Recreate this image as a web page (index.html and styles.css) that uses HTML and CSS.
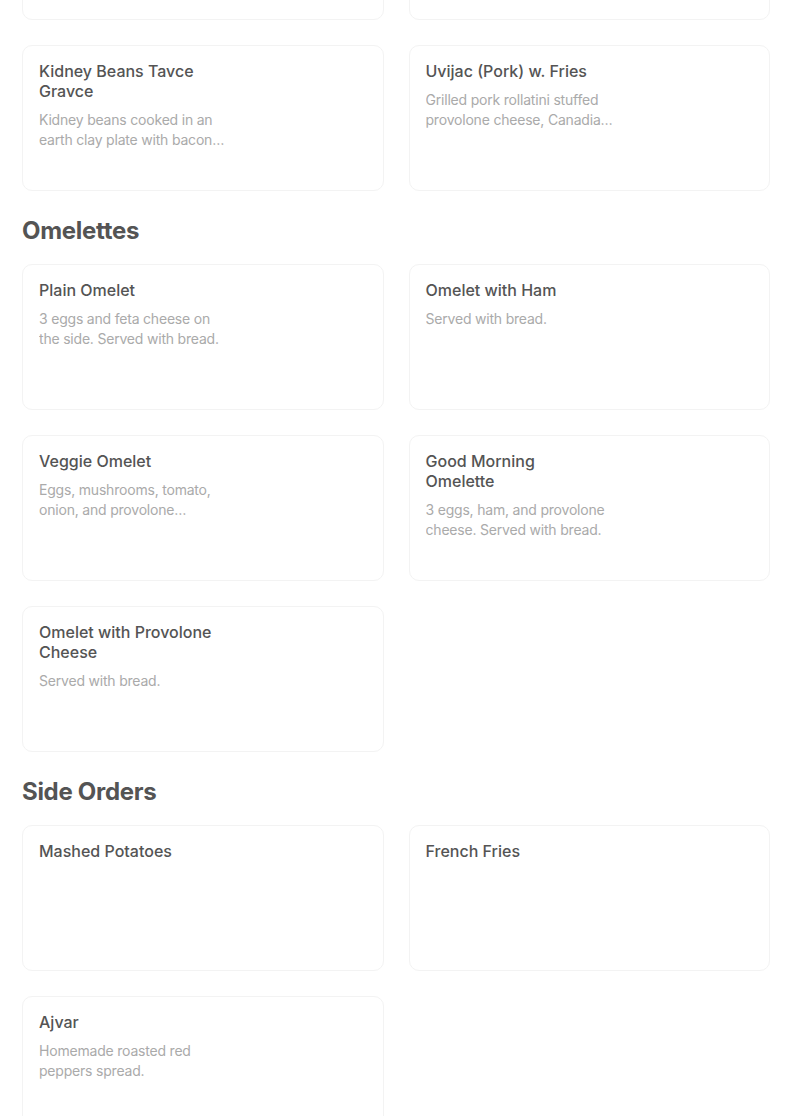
FILE: index.html
```html
<!DOCTYPE html>
<html lang="en">
  <head>
    <meta charset="UTF-8" />
    <meta name="viewport" content="width=device-width, initial-scale=1.0" />
    <title>Menu</title>
    <link rel="stylesheet" href="styles.css">
  </head>
  <body>
    <div class="menu">
      <section class="menu-section">
        <div class="item-grid">
          <!-- previous row, scrolled above the fold -->
          <div class="item-card"></div>
          <div class="item-card"></div>
          <div class="item-card">
            <div class="item-text">
              <h3 class="item-name">Kidney Beans Tavce Gravce</h3>
              <p class="item-desc">Kidney beans cooked in an earth clay plate with bacon and sausage. Served with bread.</p>
            </div>
          </div>
          <div class="item-card">
            <div class="item-text">
              <h3 class="item-name">Uvijac (Pork) w. Fries</h3>
              <p class="item-desc">Grilled pork rollatini stuffed provolone cheese, Canadian bacon and served with fries.</p>
            </div>
          </div>
        </div>
      </section>

      <section class="menu-section">
        <h2 class="section-title">Omelettes</h2>
        <div class="item-grid">
          <div class="item-card">
            <div class="item-text">
              <h3 class="item-name">Plain Omelet</h3>
              <p class="item-desc">3 eggs and feta cheese on the side. Served with bread.</p>
            </div>
          </div>
          <div class="item-card">
            <div class="item-text">
              <h3 class="item-name">Omelet with Ham</h3>
              <p class="item-desc">Served with bread.</p>
            </div>
          </div>
          <div class="item-card">
            <div class="item-text">
              <h3 class="item-name">Veggie Omelet</h3>
              <p class="item-desc">Eggs, mushrooms, tomato, onion, and provolone cheese. Served with bread.</p>
            </div>
          </div>
          <div class="item-card">
            <div class="item-text">
              <h3 class="item-name">Good Morning Omelette</h3>
              <p class="item-desc">3 eggs, ham, and provolone cheese. Served with bread.</p>
            </div>
          </div>
          <div class="item-card">
            <div class="item-text">
              <h3 class="item-name">Omelet with Provolone Cheese</h3>
              <p class="item-desc">Served with bread.</p>
            </div>
          </div>
        </div>
      </section>

      <section class="menu-section">
        <h2 class="section-title">Side Orders</h2>
        <div class="item-grid">
          <div class="item-card">
            <div class="item-text">
              <h3 class="item-name">Mashed Potatoes</h3>
            </div>
          </div>
          <div class="item-card">
            <div class="item-text">
              <h3 class="item-name">French Fries</h3>
            </div>
          </div>
          <div class="item-card">
            <div class="item-text">
              <h3 class="item-name">Ajvar</h3>
              <p class="item-desc">Homemade roasted red peppers spread.</p>
            </div>
          </div>
        </div>
      </section>
    </div>
  </body>
</html>
```

FILE: styles.css
```css
body {
  font-family: Inter, "Noto Sans", Arial, sans-serif;
  background-color: #fff;
  color: #545454;
  margin: 0;
}

/* page is shown scrolled down a little, so the first row sits above the fold */
.menu {
  padding: 0 34px 0 22px;
  margin-top: -126px;
}

.menu-section + .menu-section {
  margin-top: 24px;
}

.section-title {
  font-size: 24px;
  font-weight: 700;
  line-height: 32px;
  letter-spacing: -0.3px;
  color: #545454;
  margin: 0 0 17px;
}

.item-grid {
  display: grid;
  grid-template-columns: 1fr 1fr;
  column-gap: 25px;
  row-gap: 25px;
}

.item-card {
  box-sizing: border-box;
  height: 146px;
  padding: 15px 16px;
  border: 1px solid #f3f3f3;
  border-radius: 10px;
  background: #fff;
}

.item-text {
  max-width: 188px;
}

.item-name {
  max-width: 176px;
  font-size: 16px;
  font-weight: 500;
  line-height: 20px;
  color: #545454;
  margin: 0;
}

.item-desc {
  font-size: 14px;
  line-height: 20px;
  letter-spacing: -0.2px;
  color: #aaaaaa;
  margin: 9px 0 0;
  display: -webkit-box;
  -webkit-line-clamp: 2;
  -webkit-box-orient: vertical;
  overflow: hidden;
}
```
